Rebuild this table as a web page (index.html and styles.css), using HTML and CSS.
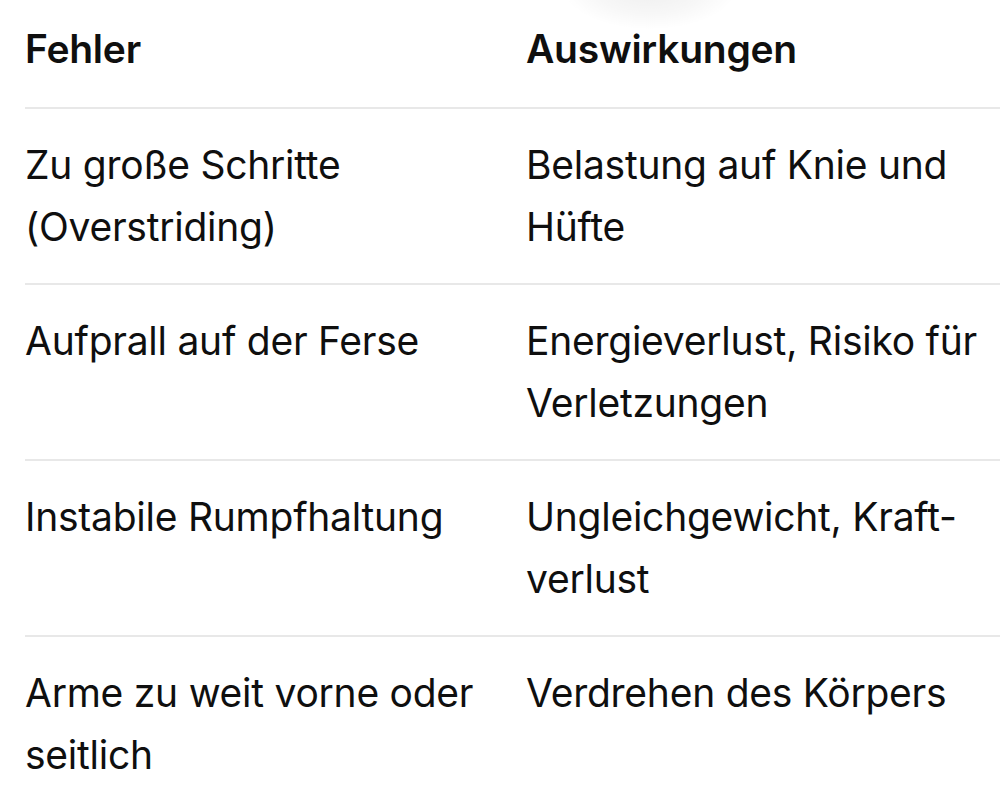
FILE: index.html
```html
<!DOCTYPE html>
<html lang="de">
<head>
<meta charset="utf-8">
<title>Fehler und Auswirkungen</title>
<link rel="stylesheet" href="styles.css">
</head>
<body>
<div class="shade"></div>
<div class="table">
  <div class="row head">
    <div class="cell">Fehler</div>
    <div class="cell">Auswirkungen</div>
  </div>
  <div class="row">
    <div class="cell">Zu große Schritte (Overstriding)</div>
    <div class="cell">Belastung auf Knie und Hüfte</div>
  </div>
  <div class="row">
    <div class="cell">Aufprall auf der Ferse</div>
    <div class="cell">Energieverlust, Risiko für Verletzungen</div>
  </div>
  <div class="row">
    <div class="cell">Instabile Rumpfhaltung</div>
    <div class="cell">Ungleichgewicht, Kraft-verlust</div>
  </div>
  <div class="row last">
    <div class="cell">Arme zu weit vorne oder seitlich</div>
    <div class="cell">Verdrehen des Körpers</div>
  </div>
</div>
</body>
</html>
```

FILE: styles.css
```css
html, body {
  margin: 0;
  padding: 0;
  background: #ffffff;
  overflow: hidden;
}
body {
  width: 1000px;
  height: 798px;
  position: relative;
  font-family: Inter, "Noto Sans", "Liberation Sans", sans-serif;
  color: #0f0f0f;
}
.shade {
  position: absolute;
  left: 560px;
  top: -60px;
  width: 180px;
  height: 90px;
  border-radius: 50%;
  background: radial-gradient(ellipse at center, rgba(0,0,0,0.07) 0%, rgba(0,0,0,0.03) 45%, rgba(0,0,0,0) 70%);
}
.table {
  margin-left: 25px;
  padding-top: 18px;
  width: 990px;
}
.row {
  display: grid;
  grid-template-columns: 501px 1fr;
  border-bottom: 2px solid #e8e8e8;
  padding: 25px 0;
}
.row.head {
  padding-top: 0;
  padding-bottom: 27px;
}
.row.last {
  border-bottom: none;
}
.cell {
  font-size: 39px;
  line-height: 62px;
  font-weight: 400;
  padding-right: 24px;
  letter-spacing: -0.25px;
}
.row .cell:last-child {
  padding-right: 0;
  width: 470px;
}
.head .cell {
  font-weight: 600;
}
```
